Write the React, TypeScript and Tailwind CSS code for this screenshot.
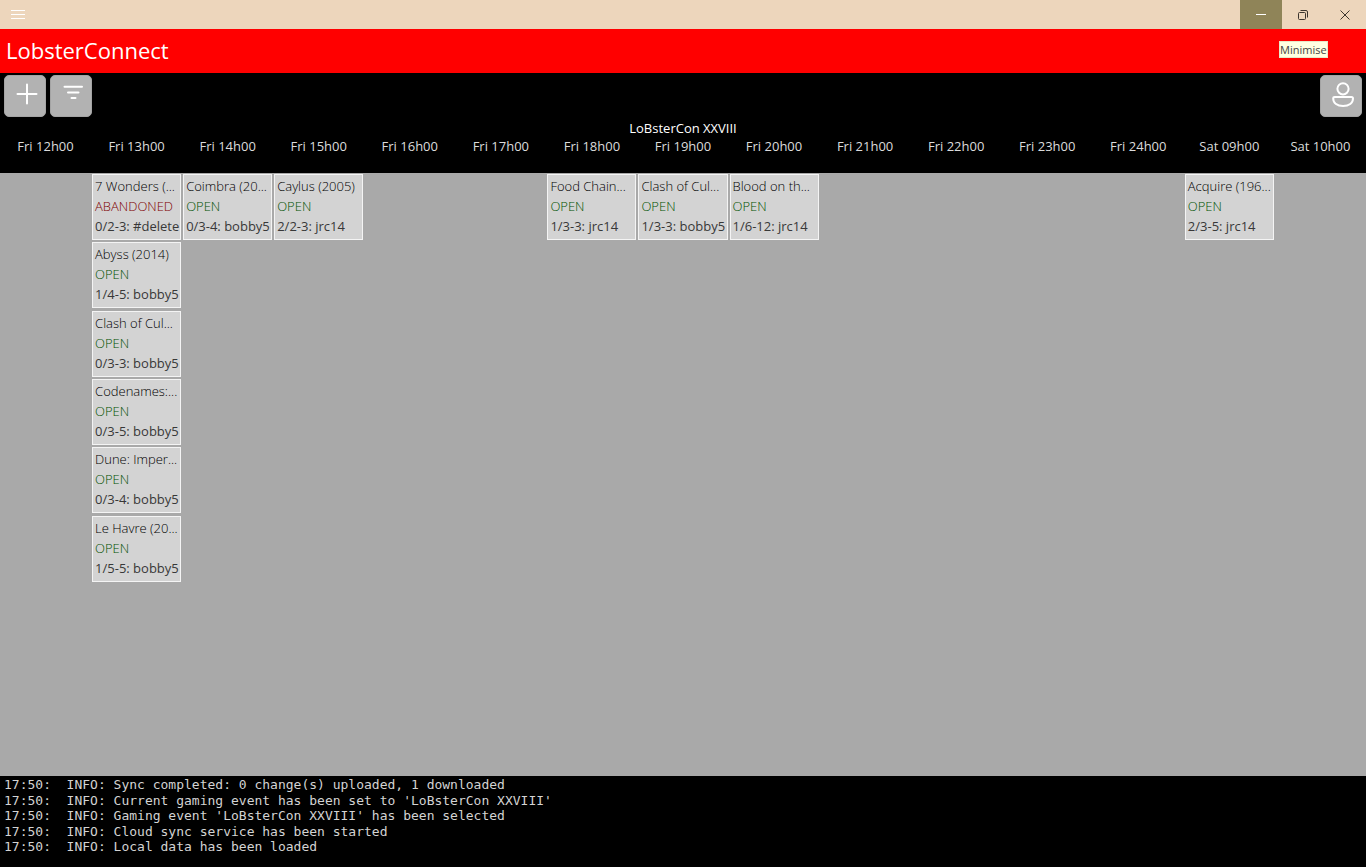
import type { ReactNode } from "react";

type Session = { title: string; status: "OPEN" | "ABANDONED"; seats: string };

const open = (title: string, seats: string): Session => ({ title, status: "OPEN", seats });

const slots: { time: string; sessions: Session[] }[] = [
  { time: "Fri 12h00", sessions: [] },
  {
    time: "Fri 13h00",
    sessions: [
      { title: "7 Wonders (...", status: "ABANDONED", seats: "0/2-3: #delete" },
      open("Abyss (2014)", "1/4-5: bobby5"),
      open("Clash of Cul...", "0/3-3: bobby5"),
      open("Codenames:...", "0/3-5: bobby5"),
      open("Dune: Imper...", "0/3-4: bobby5"),
      open("Le Havre (20...", "1/5-5: bobby5"),
    ],
  },
  { time: "Fri 14h00", sessions: [open("Coimbra (20...", "0/3-4: bobby5")] },
  { time: "Fri 15h00", sessions: [open("Caylus (2005)", "2/2-3: jrc14")] },
  { time: "Fri 16h00", sessions: [] },
  { time: "Fri 17h00", sessions: [] },
  { time: "Fri 18h00", sessions: [open("Food Chain...", "1/3-3: jrc14")] },
  { time: "Fri 19h00", sessions: [open("Clash of Cul...", "1/3-3: bobby5")] },
  { time: "Fri 20h00", sessions: [open("Blood on th...", "1/6-12: jrc14")] },
  { time: "Fri 21h00", sessions: [] },
  { time: "Fri 22h00", sessions: [] },
  { time: "Fri 23h00", sessions: [] },
  { time: "Fri 24h00", sessions: [] },
  { time: "Sat 09h00", sessions: [open("Acquire (196...", "2/3-5: jrc14")] },
  { time: "Sat 10h00", sessions: [] },
];

const rows = [0, 1, 2, 3, 4, 5];

const log = [
  "17:50:  INFO: Sync completed: 0 change(s) uploaded, 1 downloaded",
  "17:50:  INFO: Current gaming event has been set to 'LoBsterCon XXVIII'",
  "17:50:  INFO: Gaming event 'LoBsterCon XXVIII' has been selected",
  "17:50:  INFO: Cloud sync service has been started",
  "17:50:  INFO: Local data has been loaded",
];

function ToolButton({ label, children }: { label: string; children: ReactNode }) {
  return (
    <button aria-label={label} className="size-[42px] rounded-[5px] border border-[#a4a4a4] bg-[#b2b2b2]">
      <svg viewBox="0 0 40 40" className="size-10" fill="none" stroke="white" strokeWidth="2" strokeLinecap="round">
        {children}
      </svg>
    </button>
  );
}

function SessionCard({ session }: { session: Session }) {
  return (
    <button className="block w-full overflow-hidden border border-[#f4f4f4] bg-[#d3d3d3] px-0.5 pt-px pb-[3px] text-left text-[13px] leading-5 font-light whitespace-nowrap text-black">
      <span className="block">{session.title}</span>
      <span className={session.status === "OPEN" ? "block text-[#005200]" : "block text-[#800000]"}>
        {session.status}
      </span>
      <span className="block font-normal text-[#383838]">{session.seats}</span>
    </button>
  );
}

export default function App() {
  return (
    <div className="flex min-h-screen flex-col bg-[#a9a9a9] font-['Open_Sans','Noto_Sans',sans-serif]">
      <div className="flex h-[29px] items-stretch justify-between bg-[#edd6bc]">
        <button aria-label="Menu" className="px-[11px]">
          <svg viewBox="0 0 14 14" className="size-3.5" stroke="white" strokeWidth="1">
            <path d="M0 2.5h14M0 6.5h14M0 10.5h14" />
          </svg>
        </button>
        <div className="flex">
          <button aria-label="Minimise" aria-describedby="minimise-tip" className="relative flex w-[42px] items-center justify-center bg-[#8f8458]">
            <svg viewBox="0 0 10 10" className="size-2.5" stroke="white" strokeWidth="1">
              <path d="M0 4.5h10" />
            </svg>
            <span
              id="minimise-tip"
              role="tooltip"
              className="absolute top-[41px] left-[39px] z-10 border border-[#e8e8c8] bg-[#ffffe1] text-[11px] leading-[15px] text-[#444]"
            >
              Minimise
            </span>
          </button>
          <button aria-label="Restore" className="flex w-[42px] items-center justify-center">
            <svg viewBox="0 0 10 10" className="size-2.5" fill="none" stroke="#3c352e" strokeWidth="1">
              <rect x="0.5" y="2.5" width="7" height="7" rx="1" />
              <path d="M2.5 .5H8a1.5 1.5 0 0 1 1.5 1.5V7.5" />
            </svg>
          </button>
          <button aria-label="Close" className="flex w-[42px] items-center justify-center">
            <svg viewBox="0 0 10 10" className="size-2.5" stroke="#3c352e" strokeWidth="1">
              <path d="M.5.5l9 9M9.5.5l-9 9" />
            </svg>
          </button>
        </div>
      </div>

      <header className="h-11 bg-[#ff0000] px-1.5 pt-1.5">
        <h1 className="text-[22px] leading-[30px] text-white">LobsterConnect</h1>
      </header>

      <div className="flex justify-between bg-black px-1 pt-0.5">
        <div className="flex gap-1">
          <ToolButton label="Add session">
            <path d="M12.500 18h19M22 8.500v19" />
          </ToolButton>
          <ToolButton label="Filter">
            <path d="M13.500 10.700h17.500M17 16.400h10.500M20.500 22h4" />
          </ToolButton>
        </div>
        <ToolButton label="Account">
          <circle cx="22" cy="12.800" r="5.600" />
          <path d="M13.700 21h16.800q1.500 0 1.500 1.500c0 4.600-4 7.500-9.900 7.500s-9.900-2.900-9.900-7.500q0-1.500 1.500-1.500z" />
        </ToolButton>
      </div>

      <main className="flex-1">
        <h2 className="bg-black pt-0.5 text-center text-[13px] leading-[18px] font-normal text-white">LoBsterCon XXVIII</h2>
        <table className="h-[446px] w-full table-fixed border-collapse">
          <thead className="bg-black">
            <tr className="h-9">
              {slots.map((slot) => (
                <th key={slot.time} scope="col" className="h-9 p-0 align-top text-[13px] leading-[18px] font-normal text-[#dcdcdc]">
                  {slot.time}
                </th>
              ))}
            </tr>
          </thead>
          <tbody>
            {rows.map((row) => (
              <tr key={row}>
                {slots.map((slot) => (
                  <td key={slot.time} className="p-px align-top">
                    {slot.sessions[row] && <SessionCard session={slot.sessions[row]} />}
                  </td>
                ))}
              </tr>
            ))}
          </tbody>
        </table>
      </main>

      <footer className="bg-black pt-px pb-3">
        <ul className="grid min-h-[78px] auto-rows-fr px-1 font-['DejaVu_Sans_Mono',monospace] text-[13px] leading-[15px] whitespace-pre text-[#d3d3d3]">
          {log.map((line) => (
            <li key={line}>{line}</li>
          ))}
        </ul>
      </footer>
    </div>
  );
}
